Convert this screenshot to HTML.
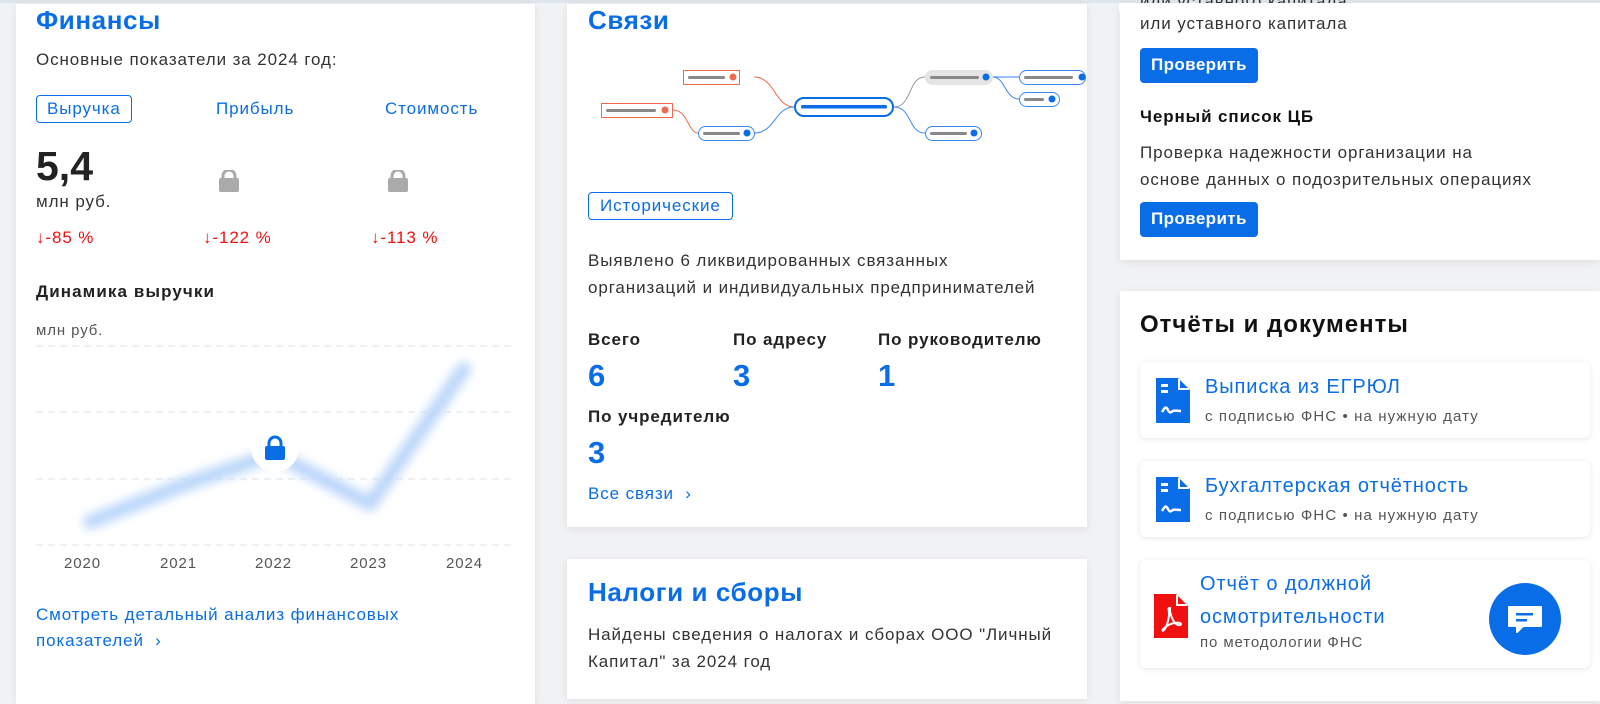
<!DOCTYPE html>
<html><head><meta charset="utf-8"><style>
*{margin:0;padding:0;box-sizing:border-box}
body{width:1600px;height:693px;overflow:hidden;background:#f1f2f4;font-family:"Liberation Sans",sans-serif;position:relative;color:#222;letter-spacing:.9px}
.card{position:absolute;background:#fff;box-shadow:0 2px 8px rgba(0,0,0,.08)}
.abs{position:absolute;white-space:nowrap}
.blue{color:#0a6de8}
.h{font-weight:bold;font-size:26px;letter-spacing:.6px}
.btn{position:absolute;background:#0a6de8;color:#fff;font-weight:bold;font-size:17px;border-radius:4px;padding:7px 11px 0;height:35px;letter-spacing:.4px}
.doc{position:absolute;left:20px;right:10px;height:76px;background:#fff;border-radius:6px;box-shadow:0 1px 6px rgba(0,0,0,.1)}
.g{color:#555}
</style></head><body>
<div class="abs" style="left:0;top:0;width:1600px;height:3px;background:#dde5ee"></div>

<!-- LEFT -->
<div class="card" style="left:16px;top:4px;width:519px;height:700px">
 <div class="abs h blue" style="left:20px;top:1px">Финансы</div>
 <div class="abs" style="left:20px;top:46px;font-size:17px;color:#333">Основные показатели за 2024 год:</div>
 <div class="abs blue" style="left:20px;top:91px;border:1px solid #0a6de8;border-radius:4px;padding:3px 10px;font-size:17px">Выручка</div>
 <div class="abs blue" style="left:200px;top:95px;font-size:17px">Прибыль</div>
 <div class="abs blue" style="left:369px;top:95px;font-size:17px">Стоимость</div>
 <div class="abs" style="left:20px;top:139px;font-size:41px;font-weight:bold;color:#222;letter-spacing:0">5,4</div>
 <div class="abs" style="left:20px;top:188px;font-size:17px;color:#333">млн руб.</div>
 <svg class="abs" style="left:203px;top:166px" width="20" height="22"><rect x="0" y="8" width="20" height="14" rx="2" fill="#aaa"/><path d="M4 9V6a6 6 0 0 1 12 0v3" stroke="#aaa" stroke-width="3" fill="none"/></svg>
 <svg class="abs" style="left:372px;top:166px" width="20" height="22"><rect x="0" y="8" width="20" height="14" rx="2" fill="#aaa"/><path d="M4 9V6a6 6 0 0 1 12 0v3" stroke="#aaa" stroke-width="3" fill="none"/></svg>
 <div class="abs" style="left:20px;top:224px;font-size:17px;color:#f01010">↓-85 %</div>
 <div class="abs" style="left:187px;top:224px;font-size:17px;color:#f01010">↓-122 %</div>
 <div class="abs" style="left:355px;top:224px;font-size:17px;color:#f01010">↓-113 %</div>
 <div class="abs" style="left:20px;top:278px;font-size:17px;font-weight:bold;letter-spacing:1.1px">Динамика выручки</div>
 <div class="abs g" style="left:20px;top:318px;font-size:15px">млн руб.</div>
 <svg class="abs" style="left:0;top:330px" width="519" height="230">
  <defs><filter id="b" x="-20%" y="-20%" width="140%" height="140%"><feGaussianBlur stdDeviation="5"/></filter></defs>
  <g stroke="#dde0e4" stroke-dasharray="7,5"><line x1="20" y1="12" x2="500" y2="12"/><line x1="20" y1="78" x2="500" y2="78"/><line x1="20" y1="145" x2="500" y2="145"/><line x1="20" y1="211" x2="500" y2="211"/></g>
  <polyline points="74,188 170,150 259,120 354,170 448,35" fill="none" stroke="#b9d5fa" stroke-width="14" stroke-linejoin="round" stroke-linecap="round" filter="url(#b)"/>
  <circle cx="259" cy="114" r="24" fill="#fff"/>
  <rect x="249" y="112" width="20" height="14" rx="2" fill="#0a6de8"/><path d="M253 113v-4a6 6 0 0 1 12 0v4" stroke="#0a6de8" stroke-width="3" fill="none"/>
 </svg>
 <div class="abs g" style="left:48px;top:551px;font-size:15px">2020</div>
 <div class="abs g" style="left:144px;top:551px;font-size:15px">2021</div>
 <div class="abs g" style="left:239px;top:551px;font-size:15px">2022</div>
 <div class="abs g" style="left:334px;top:551px;font-size:15px">2023</div>
 <div class="abs g" style="left:430px;top:551px;font-size:15px">2024</div>
 <div class="abs blue" style="left:20px;top:598px;font-size:17px;line-height:26px">Смотреть детальный анализ финансовых<br>показателей &nbsp;›</div>
</div>

<!-- MIDDLE -->
<div class="card" style="left:567px;top:4px;width:520px;height:523px">
 <div class="abs h blue" style="left:21px;top:1px">Связи</div>
 <div class="abs blue" style="left:21px;top:188px;border:1px solid #0a6de8;border-radius:4px;padding:3px 11px;font-size:17px">Исторические</div>
 <div class="abs" style="left:21px;top:243px;font-size:17px;line-height:27px;color:#333">Выявлено 6 ликвидированных связанных<br>организаций и индивидуальных предпринимателей</div>
 <div class="abs" style="left:21px;top:326px;font-size:17px;font-weight:bold">Всего</div>
 <div class="abs" style="left:166px;top:326px;font-size:17px;font-weight:bold">По адресу</div>
 <div class="abs" style="left:311px;top:326px;font-size:17px;font-weight:bold">По руководителю</div>
 <div class="abs blue" style="left:21px;top:354px;font-size:31px;font-weight:bold">6</div>
 <div class="abs blue" style="left:166px;top:354px;font-size:31px;font-weight:bold">3</div>
 <div class="abs blue" style="left:311px;top:354px;font-size:31px;font-weight:bold">1</div>
 <div class="abs" style="left:21px;top:403px;font-size:17px;font-weight:bold">По учредителю</div>
 <div class="abs blue" style="left:21px;top:431px;font-size:31px;font-weight:bold">3</div>
 <div class="abs blue" style="left:21px;top:480px;font-size:17px">Все связи &nbsp;›</div>
</div>
<svg class="abs" style="left:0;top:0" width="1100" height="160">
  <g fill="none" stroke-width="1">
   <path d="M754 77 C775 77,775 107,794 107" stroke="#f26a4b"/>
   <path d="M673 110 C688 110,688 133,698 133" stroke="#f26a4b"/>
   <path d="M754 133 C775 133,775 107,794 107" stroke="#3a86f0"/>
   <path d="M894 107 C912 107,908 77,925 77" stroke="#999"/>
   <path d="M894 107 C912 107,908 133,925 133" stroke="#3a86f0"/>
   <path d="M993 77 L1019 77" stroke="#3a86f0"/>
   <path d="M993 77 C1005 77,1005 99,1019 99" stroke="#3a86f0"/>
  </g>
  <rect x="683.5" y="70.5" width="56" height="14" fill="#fff" stroke="#f26a4b"/><rect x="688" y="76" width="37" height="3" rx="1.5" fill="#888"/><circle cx="733" cy="77" r="3.5" fill="#f26a4b"/>
  <rect x="601.5" y="103.5" width="71" height="14" fill="#fff" stroke="#f26a4b"/><rect x="606" y="109" width="50" height="3" rx="1.5" fill="#888"/><circle cx="665" cy="110" r="3.5" fill="#f26a4b"/>
  <rect x="698.5" y="126.5" width="56" height="14" rx="7" fill="#fff" stroke="#3a86f0"/><rect x="703" y="132" width="37" height="3" rx="1.5" fill="#888"/><circle cx="747" cy="133" r="3.5" fill="#0a6de8"/>
  <rect x="795" y="98" width="98" height="18" rx="9" fill="#fff" stroke="#0a6de8" stroke-width="2"/><rect x="801" y="105" width="86" height="3.5" rx="1.5" fill="#0a6de8"/>
  <rect x="925" y="70" width="68" height="15" rx="7.5" fill="#e4e4e4"/><rect x="930" y="76" width="49" height="3" rx="1.5" fill="#888"/><circle cx="986" cy="77" r="3.5" fill="#0a6de8"/>
  <rect x="925.5" y="126.5" width="56" height="14" rx="7" fill="#fff" stroke="#3a86f0"/><rect x="930" y="132" width="37" height="3" rx="1.5" fill="#888"/><circle cx="974" cy="133" r="3.5" fill="#0a6de8"/>
  <rect x="1019.5" y="70.5" width="66" height="14" rx="7" fill="#fff" stroke="#3a86f0"/><rect x="1024" y="76" width="49" height="3" rx="1.5" fill="#888"/><circle cx="1082" cy="77" r="3.5" fill="#0a6de8"/>
  <rect x="1019.5" y="92.5" width="40" height="14" rx="7" fill="#fff" stroke="#3a86f0"/><rect x="1024" y="98" width="20" height="3" rx="1.5" fill="#888"/><circle cx="1052" cy="99" r="3.5" fill="#0a6de8"/>
</svg>
<div class="card" style="left:567px;top:559px;width:520px;height:140px">
 <div class="abs h blue" style="left:21px;top:18px">Налоги и сборы</div>
 <div class="abs" style="left:21px;top:62px;font-size:17px;line-height:27px;color:#333">Найдены сведения о налогах и сборах ООО "Личный<br>Капитал" за 2024 год</div>
</div>

<!-- RIGHT -->
<div class="card" style="left:1120px;top:4px;width:480px;height:256px">
 <div class="abs" style="left:20px;top:-12px;font-size:17px;color:#333">или уставного капитала</div>
 <div class="abs" style="left:20px;top:10px;font-size:17px;color:#333">или уставного капитала</div>
 <div class="btn" style="left:20px;top:44px">Проверить</div>
 <div class="abs" style="left:20px;top:103px;font-size:17px;font-weight:bold;color:#111">Черный список ЦБ</div>
 <div class="abs" style="left:20px;top:135px;font-size:17px;line-height:27px;color:#333">Проверка надежности организации на<br>основе данных о подозрительных операциях</div>
 <div class="btn" style="left:20px;top:198px">Проверить</div>
</div>
<div class="abs" style="left:1119px;top:3px;width:481px;height:9px;background:#fff"></div>
<div class="card" style="left:1120px;top:291px;width:480px;height:410px">
 <div class="abs" style="left:20px;top:20px;font-size:24px;font-weight:bold;color:#111;letter-spacing:1px">Отчёты и документы</div>
 <div class="doc" style="top:71px">
  <svg class="abs" style="left:16px;top:16px" width="34" height="45"><path d="M0 0H22L34 12V45H0Z" fill="#0a6de8"/><path d="M23 1V11H33" fill="none" stroke="#fff" stroke-width="2"/><rect x="5" y="6" width="7" height="3" fill="#fff"/><rect x="5" y="12" width="7" height="3" fill="#fff"/><path d="M6 34c3-5 4-6 6-2s3 2 5 1 4 0 8 0" stroke="#fff" stroke-width="2.5" fill="none"/></svg>
  <div class="abs blue" style="left:65px;top:14px;font-size:20px">Выписка из ЕГРЮЛ</div>
  <div class="abs g" style="left:65px;top:46px;font-size:15px;letter-spacing:1.1px">с подписью ФНС • на нужную дату</div>
 </div>
 <div class="doc" style="top:170px">
  <svg class="abs" style="left:16px;top:16px" width="34" height="45"><path d="M0 0H22L34 12V45H0Z" fill="#0a6de8"/><path d="M23 1V11H33" fill="none" stroke="#fff" stroke-width="2"/><rect x="5" y="6" width="7" height="3" fill="#fff"/><rect x="5" y="12" width="7" height="3" fill="#fff"/><path d="M6 34c3-5 4-6 6-2s3 2 5 1 4 0 8 0" stroke="#fff" stroke-width="2.5" fill="none"/></svg>
  <div class="abs blue" style="left:65px;top:14px;font-size:20px">Бухгалтерская отчётность</div>
  <div class="abs g" style="left:65px;top:46px;font-size:15px;letter-spacing:1.1px">с подписью ФНС • на нужную дату</div>
 </div>
 <div class="doc" style="top:269px;height:108px">
  <svg class="abs" style="left:14px;top:34px" width="34" height="44"><path d="M0 0H22L34 12V44H0Z" fill="#f01010"/><path d="M23 1V11H33" fill="none" stroke="#fff" stroke-width="2"/><path d="M17 14c-2 0-1 6 2 12s8 6 8 4-8-2-14 2-5 6-3 4 5-10 5-16-2-6 2-6" stroke="#fff" stroke-width="2" fill="none"/></svg>
  <div class="abs blue" style="left:60px;top:8px;font-size:20px;line-height:33px">Отчёт о должной<br>осмотрительности</div>
  <div class="abs g" style="left:60px;top:74px;font-size:15px">по методологии ФНС</div>
 </div>
</div>
<svg class="abs" style="left:1488px;top:582px" width="74" height="74"><circle cx="37" cy="37" r="36" fill="#0a6de8"/><path d="M21 25h32v19H35l-6 6v-6h-8z" fill="#fff" stroke="#fff" stroke-width="2" stroke-linejoin="round"/><rect x="28" y="31" width="17" height="2.5" fill="#0a6de8"/><rect x="28" y="37" width="11" height="2.5" fill="#0a6de8"/></svg>
</body></html>
